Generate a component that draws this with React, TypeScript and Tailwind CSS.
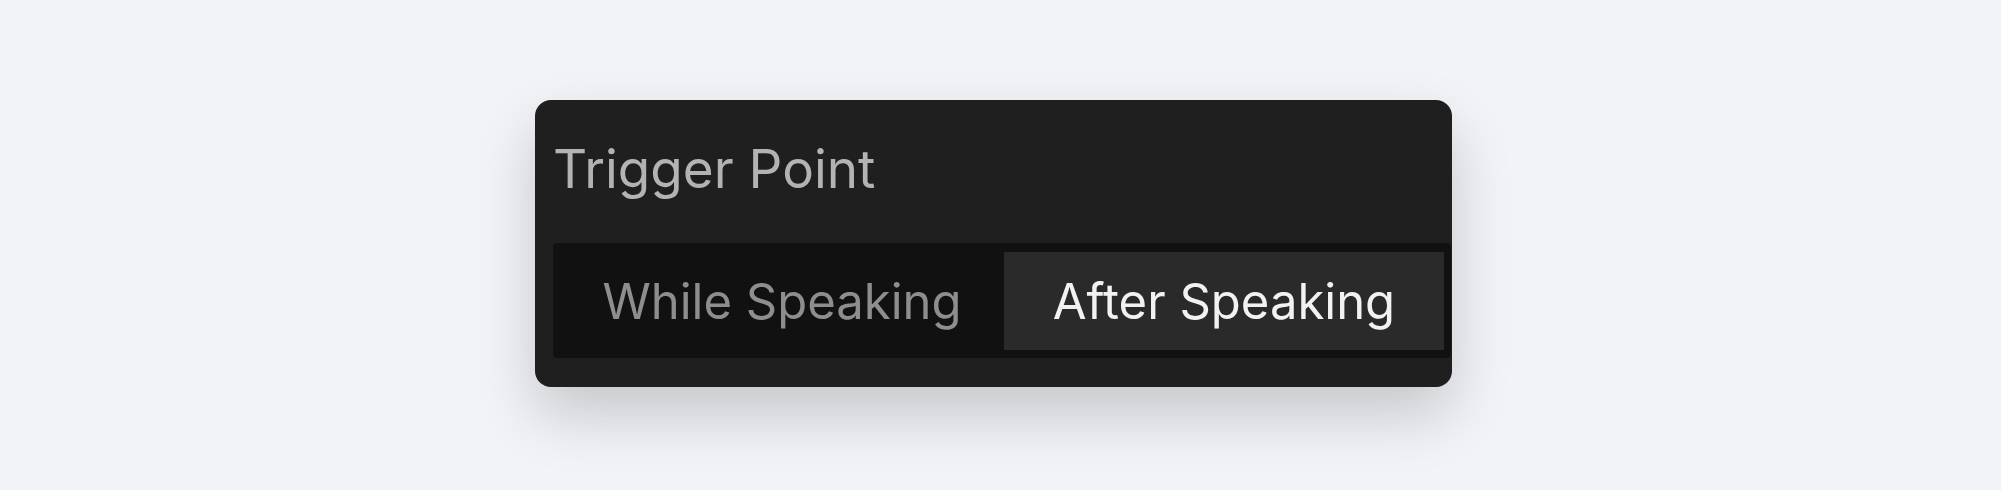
import { useState } from 'react';

const OPTIONS = ['While Speaking', 'After Speaking'];

const TriggerPointCard = () => {
  const [selected, setSelected] = useState('After Speaking');

  return (
    <div className="w-[917px] bg-[#1f1f1f] rounded-2xl pl-[18px] pr-px pt-[43px] pb-[29px] shadow-[0_28px_60px_rgba(0,0,0,0.18)] overflow-hidden">
      <h2 className="text-[53px] leading-none font-normal text-[#b3b3b3]">Trigger Point</h2>

      {/* Segmented control */}
      <div className="mt-[47px] w-[898px] flex gap-[2px] bg-[#111111] rounded pl-[9px] pr-[7px] pt-[9px] pb-[8px]">
        {OPTIONS.map((opt) => (
          <button
            key={opt}
            onClick={() => setSelected(opt)}
            className={[
              'flex-1 h-[98px] flex items-center justify-center text-[49px] leading-none',
              selected === opt ? 'bg-[#2a2a2a] text-[#f2f2f2]' : 'text-[#8e8e8e]',
            ].join(' ')}
          >
            {opt}
          </button>
        ))}
      </div>
    </div>
  );
};

export default function App() {
  return (
    <div
      className="w-[2001px] h-[490px] bg-[#f2f3f7] pt-[100px] pl-[535px]"
      style={{ fontFamily: 'Inter, "Liberation Sans", sans-serif' }}
    >
      <TriggerPointCard />
    </div>
  );
}
